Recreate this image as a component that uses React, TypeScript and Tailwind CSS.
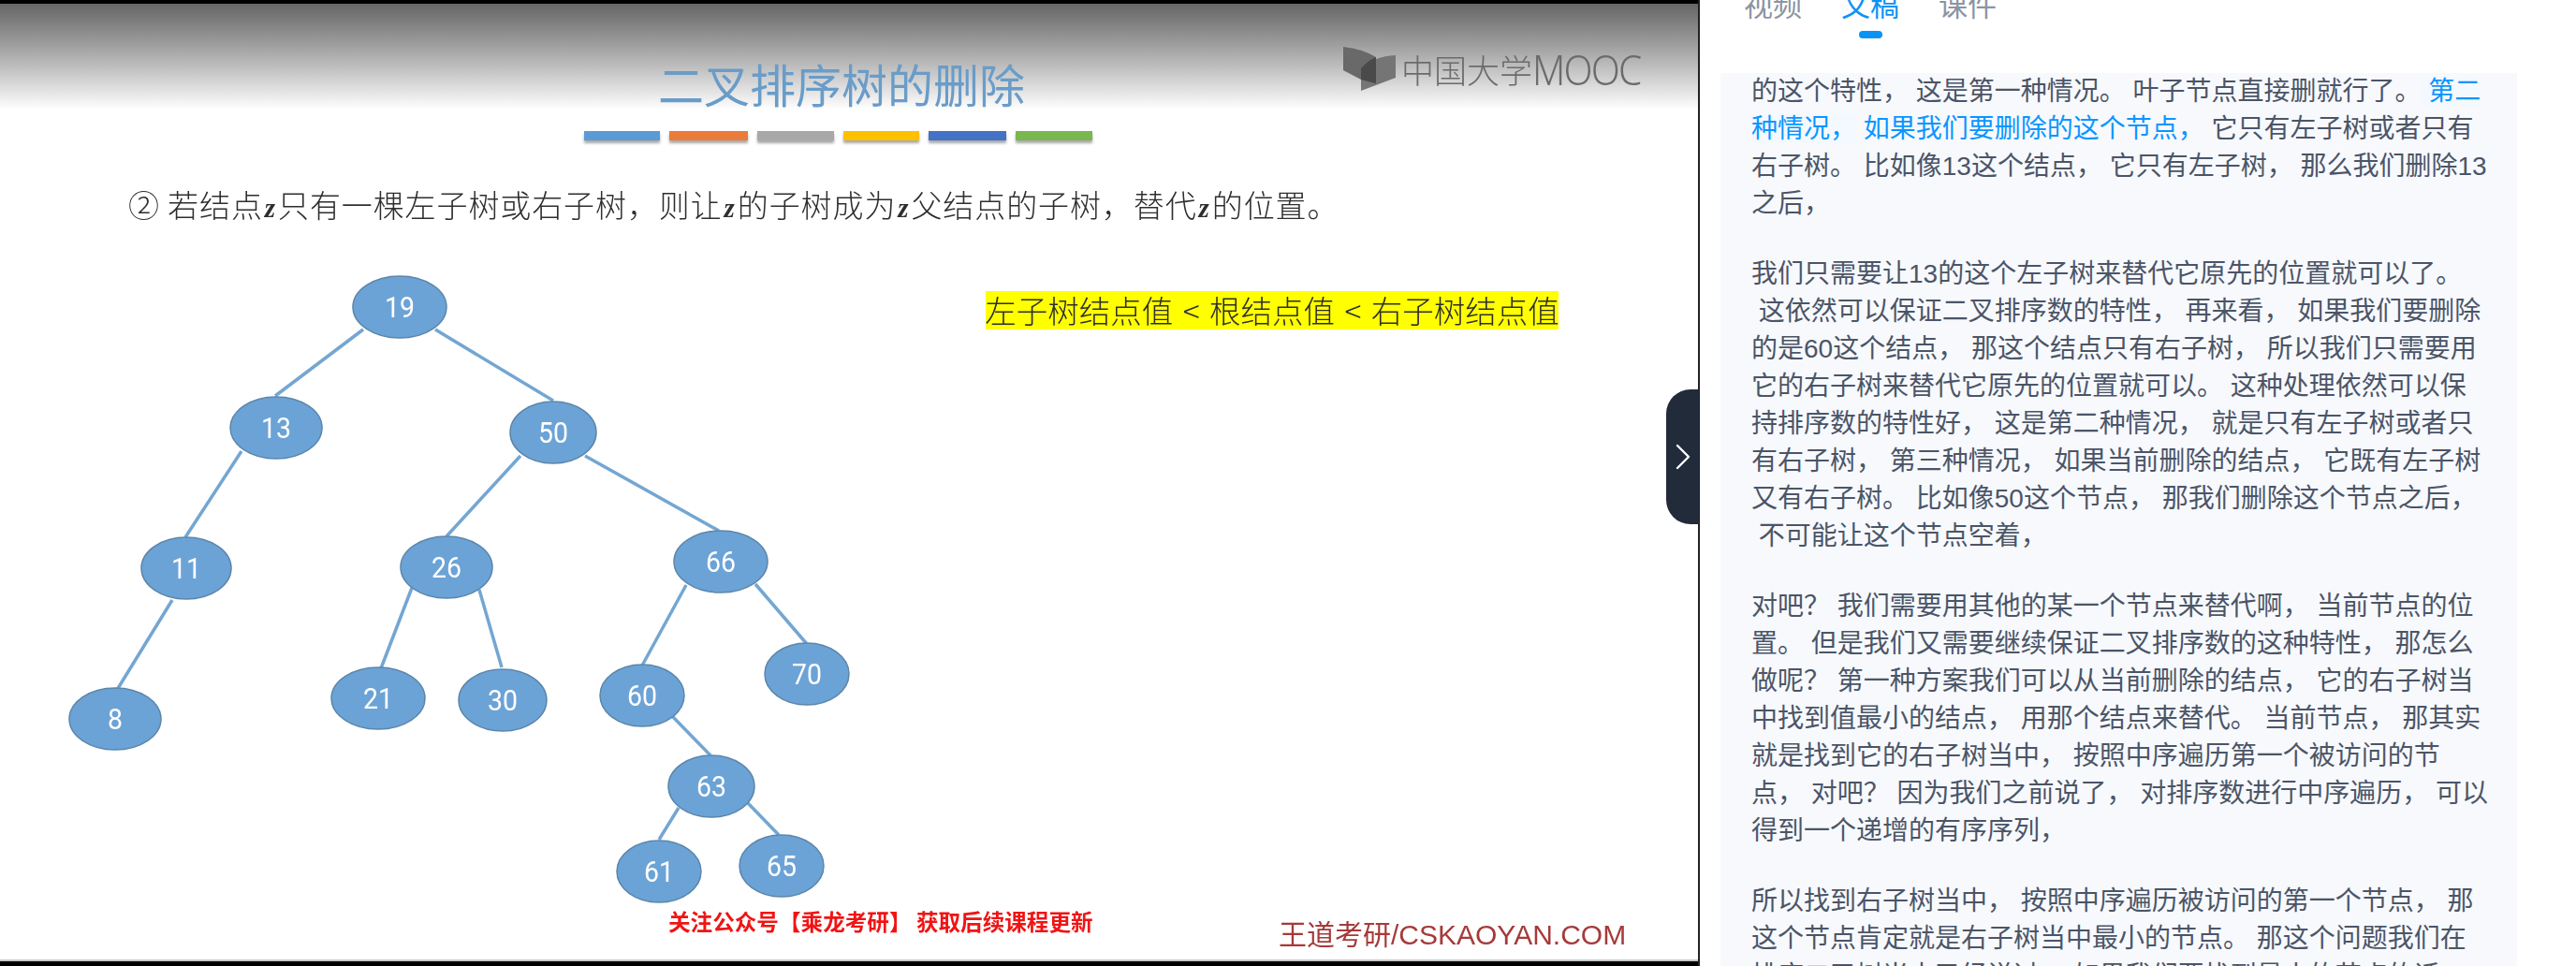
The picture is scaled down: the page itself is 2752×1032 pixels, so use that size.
import { ChevronRight } from "lucide-react";

const nodes = [
  { label: "19", x: 427, y: 328, rx: 50 },
  { label: "13", x: 295, y: 457, rx: 49 },
  { label: "50", x: 591, y: 462, rx: 46 },
  { label: "11", x: 199, y: 607, rx: 48 },
  { label: "26", x: 477, y: 606, rx: 49 },
  { label: "66", x: 770, y: 600, rx: 50 },
  { label: "8", x: 123, y: 768, rx: 49 },
  { label: "21", x: 404, y: 746, rx: 50 },
  { label: "30", x: 537, y: 748, rx: 47 },
  { label: "60", x: 686, y: 743, rx: 45 },
  { label: "70", x: 862, y: 720, rx: 45 },
  { label: "63", x: 760, y: 840, rx: 46 },
  { label: "61", x: 704, y: 931, rx: 45 },
  { label: "65", x: 835, y: 925, rx: 45 },
];

const edges = [
  [388, 352, 294, 423],
  [465, 352, 591, 428],
  [258, 482, 198, 574],
  [556, 487, 477, 573],
  [625, 487, 768, 567],
  [440, 628, 407, 714],
  [512, 630, 536, 713],
  [733, 625, 686, 711],
  [807, 624, 862, 688],
  [184, 641, 125, 737],
  [719, 766, 759, 807],
  [725, 863, 704, 897],
  [799, 858, 832, 892],
];

const barColors = [
  { w: "w-[81px]", bg: "bg-[#5b9bd5]" },
  { w: "w-[84px]", bg: "bg-[#e97c3b]" },
  { w: "w-[82px]", bg: "bg-[#a8a8a8]" },
  { w: "w-[81px]", bg: "bg-[#ffc000]" },
  { w: "w-[83px]", bg: "bg-[#4472c4]" },
  { w: "w-[82px]", bg: "bg-[#78b84e]" },
];

const para2 = [
  "我们只需要让13的这个左子树来替代它原先的位置就可以了。",
  " 这依然可以保证二叉排序数的特性， 再来看， 如果我们要删除",
  "的是60这个结点， 那这个结点只有右子树， 所以我们只需要用",
  "它的右子树来替代它原先的位置就可以。 这种处理依然可以保",
  "持排序数的特性好， 这是第二种情况， 就是只有左子树或者只",
  "有右子树， 第三种情况， 如果当前删除的结点， 它既有左子树",
  "又有右子树。 比如像50这个节点， 那我们删除这个节点之后，",
  " 不可能让这个节点空着，",
];

const para3 = [
  "对吧？ 我们需要用其他的某一个节点来替代啊， 当前节点的位",
  "置。 但是我们又需要继续保证二叉排序数的这种特性， 那怎么",
  "做呢？ 第一种方案我们可以从当前删除的结点， 它的右子树当",
  "中找到值最小的结点， 用那个结点来替代。 当前节点， 那其实",
  "就是找到它的右子树当中， 按照中序遍历第一个被访问的节",
  "点， 对吧？ 因为我们之前说了， 对排序数进行中序遍历， 可以",
  "得到一个递增的有序序列，",
];

const para4 = [
  "所以找到右子树当中， 按照中序遍历被访问的第一个节点， 那",
  "这个节点肯定就是右子树当中最小的节点。 那这个问题我们在",
  "排序二叉树当中已经说过， 如果我们要找到最小的节点的话，",
];

function Lines({ lines }: { lines: string[] }) {
  return (
    <div className="mb-[35px]">
      {lines.map((line) => (
        <div key={line} className="whitespace-pre">
          {line}
        </div>
      ))}
    </div>
  );
}

function Z() {
  return <b className="mx-[2px] font-['Liberation_Serif',serif] text-[29px] font-bold italic">z</b>;
}

function Slide() {
  return (
    <div className="relative h-[1023px] border-b-2 border-[#c8c8c8] bg-white font-['Noto_Sans_CJK_SC',sans-serif] blur-[0.5px]">
      <div className="flex h-[113px] justify-center bg-gradient-to-b from-[#666666] to-white">
        <h1 className="ml-[-16px] mt-[55px] text-[49px] font-normal leading-[60px] text-[#6a9cc8]">
          二叉排序树的删除
        </h1>
      </div>

      <div className="ml-[624px] mt-[23px] flex items-start gap-[10px]">
        {barColors.map((b) => (
          <div key={b.bg} className={`h-[10px] ${b.w} ${b.bg} shadow-[0_3px_3px_rgba(0,0,0,0.35)]`} />
        ))}
      </div>

      <p className="ml-[137px] mt-[44px] whitespace-pre text-[33px] font-light leading-[48px] tracking-[0.9px] text-[#2e2e2e]">
        ② 若结点<Z />只有一棵左子树或右子树，则让<Z />的子树成为<Z />父结点的子树，替代<Z />的位置。
      </p>

      {/* logo */}
      <div className="absolute left-[1435px] top-[46px] flex items-center gap-[6px] text-[#6b6b6b]">
        <svg width="56" height="47" viewBox="0 0 56 47">
          <path d="M56 9 Q33 10 19 23 L19 47 L56 33 Z" fill="#757575" />
          <path d="M0 0 Q20 2 35 11 L35 40 L19 35 L0 25 Z" fill="#696969" />
          <path d="M19 23 Q26 15 35 11 L35 39 L19 35 Z" fill="#4a4a4a" />
        </svg>
        <span className="flex items-center whitespace-pre text-[35px] font-light leading-[44px]">
          中国大学
          <span className="origin-left scale-x-[0.92] font-['Noto_Sans',sans-serif] text-[44px] font-light tracking-[-2px]">
            MOOC
          </span>
        </span>
      </div>

      {/* 性质提示 */}
      <div className="absolute left-[1053px] top-[307px] flex h-[41px] w-[612px] items-center justify-center whitespace-pre bg-[#ffff00] text-[33.5px] font-light text-[#2e2e2e] [word-spacing:3px]">
        左子树结点值 &lt; 根结点值 &lt; 右子树结点值
      </div>

      {/* 二叉树 */}
      <svg className="absolute left-0 top-[-4px]" width="1000" height="1000" viewBox="0 0 1000 1000">
        {edges.map(([x1, y1, x2, y2]) => (
          <line key={`${x1}-${y1}`} x1={x1} y1={y1} x2={x2} y2={y2} stroke="#74a6d2" strokeWidth="3.5" />
        ))}
        {nodes.map((n) => (
          <g key={n.label}>
            <ellipse cx={n.x} cy={n.y} rx={n.rx} ry={33} fill="#6ca3d6" stroke="#5b86ab" strokeWidth="1.5" />
            <text
              x={n.x}
              y={n.y + 11}
              textAnchor="middle"
              fontSize="32"
              fill="#ffffff"
              fontFamily="Roboto, sans-serif"
              textLength={n.label.length * 16}
              lengthAdjust="spacingAndGlyphs"
            >
              {n.label}
            </text>
          </g>
        ))}
      </svg>

      <div className="absolute left-[714px] top-[966px] whitespace-pre text-[23.6px] font-bold leading-[28px] text-[#f01414]">
        关注公众号【乘龙考研】 获取后续课程更新
      </div>
      <div className="absolute left-[1366px] top-[974px] whitespace-pre text-[30px] leading-[36px] text-[#a63a3a]">
        王道考研<span className="font-['Liberation_Sans',sans-serif]">/CSKAOYAN.COM</span>
      </div>
    </div>
  );
}

export default function App() {
  return (
    <div className="relative flex h-[1032px] w-[2752px] overflow-hidden bg-white">
      <div className="w-[1816px] shrink-0 border-r-2 border-[#222222] bg-black pt-[4px]">
        <Slide />
      </div>

      <button className="absolute left-[1780px] top-[416px] flex h-[144px] w-[35px] items-center justify-center rounded-l-[26px] bg-[#222b3a] text-white">
        <ChevronRight className="h-[48px] w-[48px] shrink-0" strokeWidth={1.2} />
      </button>

      <div className="flex-1 font-['Liberation_Sans','Noto_Sans_CJK_SC',sans-serif]">
        <div className="flex h-[78px] items-start gap-[42px] pl-[47px] text-[31px] leading-[40px] text-[#8b94a3]">
          <div className="mt-[-13px]">视频</div>
          <div className="mt-[-13px] flex flex-col items-center text-[#0a93f5]">
            文稿
            <div className="mt-[6px] h-[8px] w-[25px] rounded-full bg-[#0a93f5]" />
          </div>
          <div className="mt-[-13px]">课件</div>
        </div>

        <div className="ml-[22px] h-[954px] w-[851px] overflow-hidden bg-[#f7f9fd] pl-[33px] text-[28px] leading-[40px] text-[#4b5567]">
          <div className="mb-[35px]">
            <div className="whitespace-pre">
              的这个特性， 这是第一种情况。 叶子节点直接删就行了。
              <span className="bg-[#f3f9ff] text-[#0a96ff]"> 第二</span>
            </div>
            <div className="whitespace-pre">
              <span className="bg-[#f3f9ff] text-[#0a96ff]">种情况，</span>
              <span className="text-[#0a96ff]"> 如果我们要删除的这个节点，</span> 它只有左子树或者只有
            </div>
            <div className="whitespace-pre">右子树。 比如像13这个结点， 它只有左子树， 那么我们删除13</div>
            <div className="whitespace-pre">之后，</div>
          </div>
          <Lines lines={para2} />
          <Lines lines={para3} />
          <Lines lines={para4} />
        </div>
      </div>
    </div>
  );
}
